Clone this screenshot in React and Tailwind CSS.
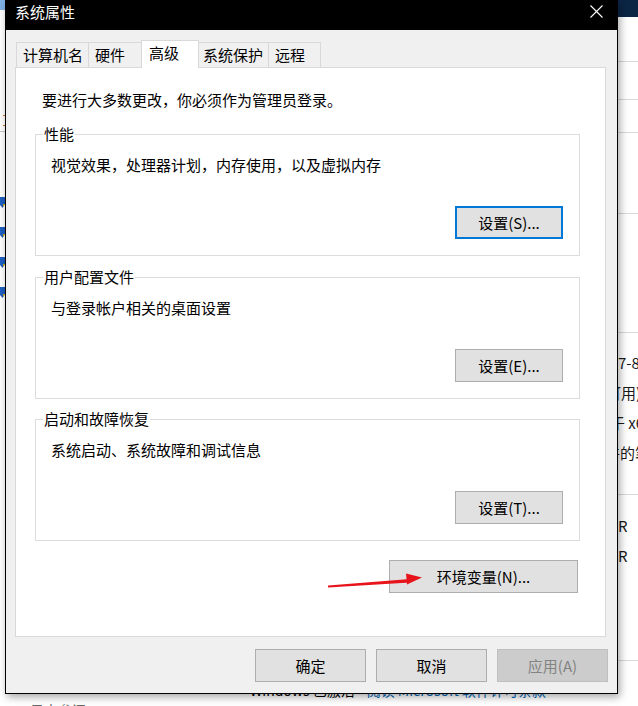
const TABS = [
  { label: '计算机名', cls: 'w-[72px] h-[25px] border-l border-t pl-[6px]' },
  { label: '硬件', cls: 'w-[53px] h-[25px] border-l border-t pl-[6px]' },
  { label: '高级', cls: 'w-[58px] h-[28px] -mb-px border-x border-t bg-white pl-[7px] pb-[3px] z-10', active: true },
  { label: '系统保护', cls: 'w-[70px] h-[25px] border-r border-t pl-[4px]' },
  { label: '远程', cls: 'w-[52px] h-[25px] border-r border-t pl-[6px]' },
]

function Btn({ children, cls = 'w-[108px]', focus, disabled }) {
  const skin = disabled
    ? 'bg-[#cccccc] border border-[#bfbfbf] text-[#838383]'
    : focus
      ? 'bg-[#e1e1e1] border-2 border-[#0078d7] text-black'
      : 'bg-[#e1e1e1] border border-[#adadad] text-black'
  return (
    <div className={`${cls} h-[33px] flex items-center justify-center leading-[20px] ${skin}`}>
      {children}
    </div>
  )
}

function GroupBox({ title, text, children }) {
  return (
    <div className="relative h-[122px] border border-[#dcdcdc] flex flex-col pl-[15px] pr-[16px] pt-[20px] pb-[16px]">
      <span className="absolute left-[7px] -top-[11px] bg-white px-px leading-[20px]">{title}</span>
      <p className="leading-[20px]">{text}</p>
      <div className="mt-auto self-end">{children}</div>
    </div>
  )
}

function Shield() {
  return (
    <svg className="mt-[19px]" width="5" height="11" viewBox="0 0 5 11">
      <path d="M0 0 H5 V7 L2.5 11 L0 8 Z" fill="#1f5fbf" />
      <path d="M3 7 H5 L3.5 10 Z" fill="#e8b400" />
    </svg>
  )
}

export default function App() {
  return (
    <div className="relative w-[638px] h-[706px] overflow-hidden bg-white text-[15px] text-black font-['Noto_Sans_CJK_SC',sans-serif]">
      {/* window behind the dialog */}
      <div className="flex flex-col h-full">
        <div className="h-[680px] shrink-0 flex">
          <div className="w-[5px] flex flex-col">
            <div className="h-[10px] bg-[#7fb2e5]" />
            <div className="mt-[105px] w-[2px] h-px ml-[3px] bg-[#c87a2a]" />
            <div className="mt-[9px] w-[2px] h-px ml-[3px] bg-[#c87a2a]" />
            <div className="mt-[5px] h-px bg-[#c8c8c8]" />
            <div className="mt-[46px]" />
            <Shield />
            <Shield />
            <Shield />
            <Shield />
          </div>
          <div className="flex-1" />
          <div className="w-[80px] flex flex-col text-[#1a1a1a]">
            <div className="h-[17px] bg-[#0b2545]" />
            <div className="h-[45px] border-b border-[#d9d9d9]" />
            <div className="h-[38px] border-b border-[#d9d9d9]" />
            <div className="h-[33px] border-b border-[#d9d9d9]" />
            <div className="h-[81px] border-b border-[#d9d9d9]" />
            <div className="h-[119px] border-b border-[#d9d9d9]" />
            <div className="h-[162px] border-b border-[#d9d9d9] pt-[15px] flex flex-col whitespace-nowrap">
              <div className="h-[30px] leading-[30px] pl-[60px]">7-8</div>
              <div className="h-[30px] leading-[30px] pl-[48px]">可用)</div>
              <div className="h-[30px] leading-[30px] pl-[52px]">于 x64</div>
              <div className="h-[30px] leading-[30px] pl-[47px]">件的笔</div>
            </div>
            <div className="h-[166px] border-b border-[#d9d9d9] pt-[16px] flex flex-col">
              <div className="h-[30px] leading-[30px] pl-[60px]">R</div>
              <div className="h-[30px] leading-[30px] pl-[60px]">R</div>
            </div>
          </div>
        </div>
        <div className="shrink-0 flex text-[14px] leading-[20px] whitespace-nowrap">
          <span className="ml-[250px]">Windows 已激活</span>
          <span className="ml-[12px] text-[#0067b8]">阅读 Microsoft 软件许可条款</span>
        </div>
        <div className="shrink-0 ml-[30px] text-[14px] leading-[20px] text-[#666]">日志参阅</div>
      </div>

      {/* dialog */}
      <div className="absolute left-[5px] top-0 w-[613px] h-[694px] border-x border-b border-black bg-[#f0f0f0] flex flex-col shadow-[2px_3px_8px_rgba(0,0,0,0.35)]">
        <div className="h-[30px] bg-black pb-[6px] flex items-center justify-between pl-[9px] pr-[14px]">
          <span className="text-white leading-[20px]">系统属性</span>
          <svg width="13" height="13" viewBox="0 0 13 13" className="-mt-[2px]">
            <path d="M0.5 0.5 L12.5 12.5 M12.5 0.5 L0.5 12.5" stroke="white" strokeWidth="1.1" />
          </svg>
        </div>

        <div className="pt-[10px] pl-[10px] h-[37px] flex items-end">
          {TABS.map(t => (
            <div key={t.label} className={`relative flex items-center border-[#d9d9d9] leading-[20px] ${t.cls}`}>
              {t.label}
            </div>
          ))}
        </div>

        <div className="ml-[9px] w-[591px] h-[570px] bg-white border border-[#d9d9d9] pt-[22px] flex flex-col">
          <p className="pl-[26px] leading-[20px]">要进行大多数更改，你必须作为管理员登录。</p>
          <div className="ml-[19px] w-[545px] mt-[24px] flex flex-col">
            <GroupBox title="性能" text="视觉效果，处理器计划，内存使用，以及虚拟内存">
              <Btn focus>设置(S)...</Btn>
            </GroupBox>
            <div className="mt-[21px]">
              <GroupBox title="用户配置文件" text="与登录帐户相关的桌面设置">
                <Btn>设置(E)...</Btn>
              </GroupBox>
            </div>
            <div className="mt-[20px]">
              <GroupBox title="启动和故障恢复" text="系统启动、系统故障和调试信息">
                <Btn>设置(T)...</Btn>
              </GroupBox>
            </div>
            <div className="mt-[19px] self-end mr-[2px]">
              <Btn cls="w-[189px]">环境变量(N)...</Btn>
            </div>
          </div>
        </div>

        <div className="mt-[12px] pr-[9px] flex justify-end gap-[10px]">
          <Btn cls="w-[111px]">确定</Btn>
          <Btn cls="w-[111px]">取消</Btn>
          <Btn cls="w-[111px]" disabled>应用(A)</Btn>
        </div>
      </div>

      {/* red annotation arrow */}
      <svg className="absolute left-[326px] top-[568px]" width="100" height="22" viewBox="0 0 100 22">
        <path d="M2 17.5 L84 11 L84 14.5 L2 19.5 Z" fill="#e8141b" />
        <path d="M80 5.5 L96 9.5 L81 16.5 Z" fill="#e8141b" />
      </svg>
    </div>
  )
}
